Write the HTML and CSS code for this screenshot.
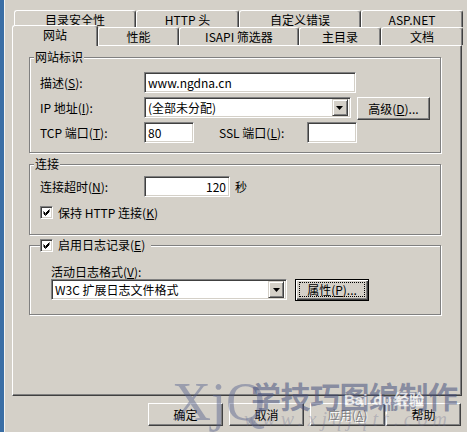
FILE: index.html
```html
<!DOCTYPE html>
<html lang="zh-CN">
<head>
    <meta charset="UTF-8">
    <title>网站 属性</title>
    <link rel="stylesheet" href="styles.css">
</head>
<body>
<div class="screen">
    <div class="desk"></div>
    <div class="window">
        <div class="tab-row back">
            <div class="tab w122">目录安全性</div>
            <div class="tab w103">HTTP 头</div>
            <div class="tab w122">自定义错误</div>
            <div class="tab w102">ASP.NET</div>
        </div>
        <div class="tab-row front">
            <div class="tab active w86">网站</div>
            <div class="tab w81">性能</div>
            <div class="tab w120">ISAPI 筛选器</div>
            <div class="tab w82">主目录</div>
            <div class="tab w82">文档</div>
        </div>

        <div class="panel">
            <fieldset class="group site">
                <legend>网站标识</legend>
                <div class="rows">
                    <div class="row">
                        <span class="label">描述(<u>S</u>):</span>
                        <input class="field w212" type="text" value="www.ngdna.cn">
                    </div>
                    <div class="row">
                        <span class="label">IP 地址(<u>I</u>):</span>
                        <div class="combo w212">
                            <span class="combo-text">(全部未分配)</span>
                            <span class="drop"><svg width="7" height="4" viewBox="0 0 7 4"><polygon points="0,0 7,0 3.5,4" fill="#000"/></svg></span>
                        </div>
                        <button class="btn adv">高级(<u>D</u>)...</button>
                    </div>
                    <div class="row">
                        <span class="label">TCP 端口(<u>T</u>):</span>
                        <input class="field w50" type="text" value="80">
                        <span class="ssl">SSL 端口(<u>L</u>):</span>
                        <input class="field w50" type="text" value="">
                    </div>
                </div>
            </fieldset>

            <fieldset class="group conn">
                <legend>连接</legend>
                <div class="row">
                    <span class="label">连接超时(<u>N</u>):</span>
                    <input class="field w86 num" type="text" value="120">
                    <span class="unit">秒</span>
                </div>
                <div class="check-row">
                    <span class="check"><svg width="9" height="9" viewBox="0 0 9 9"><path d="M1.5 3.5 L3.5 5.5 L7.5 1.5 M1.5 4.5 L3.5 6.5 L7.5 2.5 M1.5 5.5 L3.5 7.5 L7.5 3.5" stroke="#000" fill="none"/></svg></span>
                    <span>保持 HTTP 连接(<u>K</u>)</span>
                </div>
            </fieldset>

            <fieldset class="group log">
                <legend>
                    <span class="check"><svg width="9" height="9" viewBox="0 0 9 9"><path d="M1.5 3.5 L3.5 5.5 L7.5 1.5 M1.5 4.5 L3.5 6.5 L7.5 2.5 M1.5 5.5 L3.5 7.5 L7.5 3.5" stroke="#000" fill="none"/></svg></span>
                    <span>启用日志记录(<u>E</u>)</span>
                </legend>
                <div class="log-label">活动日志格式(<u>V</u>):</div>
                <div class="row">
                    <div class="combo w236">
                        <span class="combo-text">W3C 扩展日志文件格式</span>
                        <span class="drop"><svg width="7" height="4" viewBox="0 0 7 4"><polygon points="0,0 7,0 3.5,4" fill="#000"/></svg></span>
                    </div>
                    <button class="btn focus props"><span class="ring">属性(<u>P</u>)...</span></button>
                </div>
            </fieldset>
        </div>

        <div class="actions">
            <button class="btn">确定</button>
            <button class="btn">取消</button>
            <button class="btn disabled">应用(<u>A</u>)</button>
            <button class="btn help">帮助</button>
        </div>
    </div>

    <div class="watermark">
        <span class="wm-logo">XjQ</span>
        <span class="wm-title">学技巧图编制作</span>
        <span class="wm-baidu">Bai<b>du</b>经验</span>
        <span class="wm-url">www.xjqjqtt.com</span>
    </div>
</div>
</body>
</html>
```
FILE: styles.css
```css
body {
    margin: 0;
    width: 467px;
    height: 432px;
    overflow: hidden;
    background: #d4d0c8;
    font-family: "SimSun", "Noto Sans CJK SC", sans-serif;
    font-size: 12px;
    color: #000;
}
u {
    text-decoration: underline;
    text-underline-offset: 1px;
}
.screen {
    position: relative;
    display: flex;
    height: 432px;
}
.desk {
    width: 4px;
    background: #3a6ea5;
}
.window {
    flex: 1;
    border-left: 1px solid #f4f3ef;
    padding: 10px 0 0 7px;
}

/* tabs */
.tab-row {
    display: flex;
}
.tab-row.back {
    margin-left: 2px;
    height: 17px;
}
.tab {
    box-sizing: border-box;
    border: 1px solid #fff;
    border-bottom: 0;
    border-right-color: #404040;
    box-shadow: inset -1px 0 #808080;
    border-radius: 3px 3px 0 0;
    text-align: center;
    white-space: nowrap;
    background: #d4d0c8;
}
.back .tab {
    height: 17px;
    line-height: 17px;
}
.front {
    height: 18px;
}
.front .tab {
    height: 18px;
    line-height: 17px;
}
.front .tab.active {
    position: relative;
    z-index: 1;
    height: 21px;
    margin-top: -2px;
    line-height: 18px;
}
.w81 { width: 81px; }
.w82 { width: 82px; }
.w86 { width: 86px; }
.w102 { width: 102px; }
.w103 { width: 103px; }
.w120 { width: 120px; }
.w122 { width: 122px; }
.w50 { width: 50px; }
.w212 { width: 212px; }
.w236 { width: 236px; }

.panel {
    box-sizing: border-box;
    width: 450px;
    height: 351px;
    border: 1px solid #fff;
    border-right-color: #404040;
    border-bottom-color: #404040;
    box-shadow: inset -1px -1px #808080;
    padding: 0 20px 0 16px;
}

/* group boxes */
.group {
    margin: 0;
    min-width: 0;
    border: 1px solid #808080;
    box-shadow: inset 1px 1px #fff, 1px 1px #fff;
    padding: 0 10px;
}
.group legend {
    padding: 0 1px;
    margin-left: -6px;
    line-height: 14px;
    background: #d4d0c8;
}
.site {
    margin-top: 4px;
    padding-top: 8px;
    padding-bottom: 9px;
}
.conn {
    margin-top: 4px;
    padding-top: 5px;
    padding-bottom: 15px;
}
.log {
    margin-top: 3px;
    padding: 13px 10px 14px 21px;
}
.log legend {
    display: flex;
    align-items: center;
    gap: 5px;
    margin-left: -11px;
    padding: 0 6px 0 0;
}

.rows {
    display: flex;
    flex-direction: column;
    gap: 4px;
}
.row {
    display: flex;
    align-items: center;
    height: 21px;
}
.label {
    width: 104px;
    flex: none;
    line-height: 14px;
}
.ssl {
    margin-left: 25px;
    width: 88px;
}
.unit {
    margin-left: 5px;
}
.log-label {
    line-height: 14px;
}

/* sunken controls */
.field, .combo {
    box-sizing: border-box;
    height: 21px;
    border: 1px solid;
    border-color: #808080 #fff #fff #808080;
    box-shadow: inset 1px 1px #404040, inset -1px -1px #d4d0c8;
    background: #fff;
    font: inherit;
    color: #000;
    padding: 0 3px;
    margin: 0;
    outline: none;
}
.field.num {
    text-align: right;
    padding-right: 3px;
}
.combo {
    display: flex;
    align-items: center;
    padding: 2px 2px 2px 3px;
}
.combo-text {
    flex: 1;
    line-height: 14px;
    white-space: nowrap;
}
.drop {
    box-sizing: border-box;
    width: 16px;
    height: 17px;
    display: flex;
    align-items: center;
    justify-content: center;
    border: 1px solid;
    border-color: #d4d0c8 #404040 #404040 #d4d0c8;
    box-shadow: inset 1px 1px #fff, inset -1px -1px #808080;
    background: #d4d0c8;
}

.check-row {
    display: flex;
    align-items: center;
    gap: 5px;
    height: 13px;
    margin-top: 9px;
}
.check {
    box-sizing: border-box;
    width: 13px;
    height: 13px;
    flex: none;
    display: flex;
    align-items: center;
    justify-content: center;
    border: 1px solid;
    border-color: #808080 #fff #fff #808080;
    box-shadow: inset 1px 1px #404040, inset -1px -1px #d4d0c8;
    background: #fff;
}

/* raised buttons */
.btn {
    box-sizing: border-box;
    width: 75px;
    height: 23px;
    padding: 0;
    border: 1px solid;
    border-color: #fff #404040 #404040 #fff;
    box-shadow: inset -1px -1px #808080;
    background: #d4d0c8;
    font: inherit;
    color: #000;
    text-align: center;
    line-height: 20px;
}
.btn.adv {
    margin-left: 6px;
    align-self: flex-start;
}
.btn.props {
    width: 74px;
    height: 22px;
    margin-left: 8px;
}
.btn.focus {
    border-color: #000;
    box-shadow: inset 1px 1px #fff, inset -1px -1px #404040, inset -2px -2px #808080;
}
.ring {
    display: block;
    margin: 0 3px;
    border: 1px dotted #000;
    line-height: 13px;
}
.btn.disabled {
    color: #808080;
    text-shadow: 1px 1px #fff;
}
.actions {
    display: flex;
    gap: 6px;
    margin-top: 7px;
    padding-left: 136px;
}
.actions .help {
    margin-left: -5px;
}

/* watermark over the screenshot */
.watermark {
    position: absolute;
    left: 172px;
    top: 372px;
    width: 300px;
    height: 60px;
    pointer-events: none;
}
.wm-logo {
    position: absolute;
    left: 0;
    top: 0;
    font-family: "Liberation Serif", serif;
    font-size: 54px;
    line-height: 60px;
    color: rgba(85, 95, 140, 0.45);
}
.wm-title {
    position: absolute;
    left: 79px;
    top: 6px;
    font-family: "Noto Sans CJK SC", sans-serif;
    font-weight: 700;
    font-size: 30px;
    line-height: 34px;
    letter-spacing: -0.5px;
    color: rgba(70, 80, 125, 0.55);
}
.wm-baidu {
    position: absolute;
    left: 172px;
    top: 16px;
    font-family: "Liberation Sans", sans-serif;
    font-weight: 700;
    font-size: 15px;
    color: rgba(255, 255, 255, 0.75);
}
.wm-baidu b {
    margin: 0 2px 0 6px;
}
.wm-url {
    position: absolute;
    left: 72px;
    top: 36px;
    font-family: "Liberation Serif", serif;
    font-style: italic;
    font-size: 20px;
    letter-spacing: 5px;
    color: rgba(100, 105, 140, 0.3);
}
```
